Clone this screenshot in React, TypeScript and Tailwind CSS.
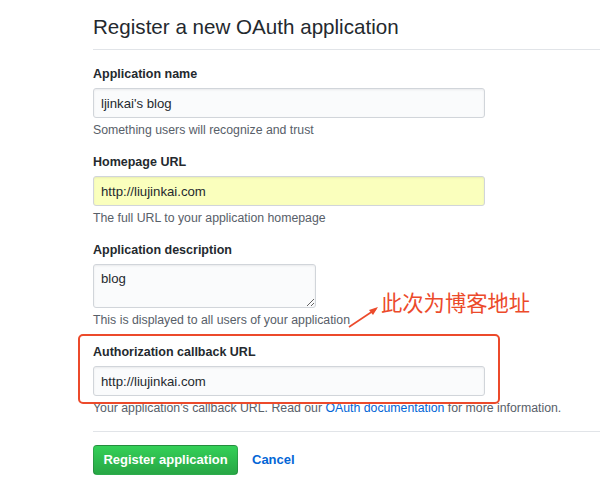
const font = { fontFamily: '"Liberation Sans", Arial, sans-serif' };

function Field({
  label,
  value,
  help,
  yellow,
}: {
  label: string;
  value: string;
  help: React.ReactNode;
  yellow?: boolean;
}) {
  return (
    <div className="flex flex-col">
      <label className="text-[12.5px] leading-[20px] font-bold text-[#24292e]">{label}</label>
      <input
        readOnly
        value={value}
        className={`mt-1 h-[30px] w-[392px] rounded-[3px] border border-[#d1d5da] px-[7px] text-[13.2px] text-[#24292e] shadow-[inset_0_1px_2px_rgba(27,31,35,0.075)] outline-none ${
          yellow ? "bg-[#faffbd]" : "bg-[#fafbfc]"
        }`}
        style={font}
      />
      <p className="mt-1 text-[12.3px] leading-[16px] text-[#586069]">{help}</p>
    </div>
  );
}

export default function App() {
  return (
    <div className="relative h-[494px] w-[600px] overflow-hidden bg-white" style={font}>
      <div className="pl-[93px] pt-[12px]">
        <h2 className="border-b border-[#e1e4e8] pb-2 text-[20.6px] leading-[29px] font-normal text-[#24292e]">
          Register a new OAuth application
        </h2>

        <div className="mt-[14px] flex flex-col gap-[14px]">
          <Field label="Application name" value="ljinkai's blog" help="Something users will recognize and trust" />
          <Field label="Homepage URL" value="http://liujinkai.com" help="The full URL to your application homepage" yellow />

          <div className="flex flex-col">
            <label className="text-[12.5px] leading-[20px] font-bold text-[#24292e]">Application description</label>
            <textarea
              readOnly
              defaultValue="blog"
              className="mt-1 h-[44px] w-[223px] rounded-[3px] border border-[#d1d5da] bg-[#fafbfc] px-[7px] py-[5px] text-[13.2px] leading-[18px] text-[#24292e] shadow-[inset_0_1px_2px_rgba(27,31,35,0.075)] outline-none"
              style={font}
            />
            <p className="mt-1 text-[12.3px] leading-[16px] text-[#586069]">This is displayed to all users of your application</p>
          </div>

          <Field
            label="Authorization callback URL"
            value="http://liujinkai.com"
            help={
              <>
                Your application’s callback URL. Read our <span className="text-[#0366d6]">OAuth documentation</span> for more
                information.
              </>
            }
          />
        </div>

        <div className="mt-[15px] border-t border-[#e1e4e8] pt-[13px]">
          <div className="flex items-center gap-[14px]">
            <button className="h-[30px] w-[145px] rounded-[4px] border border-[rgba(27,31,35,0.2)] bg-gradient-to-b from-[#34d058] to-[#28a745] text-[13px] font-bold text-white">
              Register application
            </button>
            <span className="text-[13px] font-bold text-[#0366d6]">Cancel</span>
          </div>
        </div>
      </div>

      {/* annotation overlay */}
      <div className="absolute left-[78px] top-[334px] h-[70px] w-[422px] rounded-[5px] border-2 border-[#ec4a2b]" />
      <svg className="absolute left-0 top-0" width="600" height="494">
        <line x1="349" y1="327" x2="376" y2="309" stroke="#ec4a2b" strokeWidth="1.6" />
        <path d="M378 307 L369 310 L373 315 Z" fill="#ec4a2b" />
      </svg>
      <span
        className="absolute left-[381px] top-[289px] text-[21.3px] leading-[26px] text-[#ec4a2b]"
        style={{ fontFamily: '"Noto Sans CJK SC", sans-serif' }}
      >
        此次为博客地址
      </span>
    </div>
  );
}
